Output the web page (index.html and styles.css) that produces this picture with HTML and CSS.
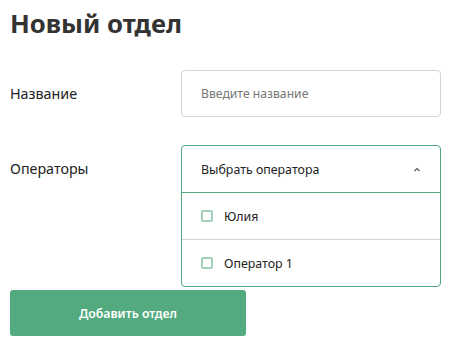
FILE: index.html
```html
<!DOCTYPE html>
<html lang="ru">
<head>
  <meta charset="UTF-8">
  <meta name="viewport" content="width=device-width, initial-scale=1.0">
  <title>Новый отдел</title>
  <link rel="stylesheet" href="styles.css">
</head>
<body>
  <h1>Новый отдел</h1>
  <div class="form">
    <div class="form-row name-row">
      <label class="label" for="name">Название</label>
      <input id="name" class="text-input" type="text" placeholder="Введите название">
    </div>
    <div class="form-row operators-row">
      <span class="label">Операторы</span>
      <div class="select">
        <div class="select-head">
          <span>Выбрать оператора</span>
          <svg class="chevron" width="8" height="5" viewBox="0 0 8 5"><path d="M1.5 4 L4 1.5 L6.5 4" fill="none" stroke="#555" stroke-width="1.2"/></svg>
        </div>
        <label class="option"><span class="box"></span>Юлия</label>
        <label class="option"><span class="box"></span>Оператор 1</label>
      </div>
    </div>
    <button class="submit">Добавить отдел</button>
  </div>
</body>
</html>
```

FILE: styles.css
```css
:root {
  --text-color: #222;
  --green: #52aa7e;
  --border: #d3d3d3;
}
body {
  margin: 0;
  padding: 10px;
  font-family: 'Noto Sans', 'Open Sans', sans-serif;
  color: var(--text-color);
  background: #fff;
}
h1 {
  margin: 0;
  font-size: 25.7px;
  font-weight: 700;
  line-height: 28px;
  color: #333;
}
.form {
  display: flex;
  flex-direction: column;
}
.form-row {
  display: flex;
  align-items: flex-start;
}
.name-row {
  margin-top: 32px;
}
.operators-row {
  margin-top: 28px;
}
.label {
  width: 171px;
  font-size: 14.3px;
  line-height: 47px;
}
.text-input {
  box-sizing: border-box;
  width: 260px;
  height: 47px;
  padding: 0 19px;
  border: 1px solid var(--border);
  border-radius: 4px;
  font-family: inherit;
  font-size: 12.2px;
  color: var(--text-color);
  outline: none;
}
.text-input::placeholder {
  color: #777;
}
.select {
  box-sizing: border-box;
  width: 260px;
  border: 1px solid var(--green);
  border-radius: 4px;
  font-size: 12.4px;
}
.select-head {
  display: flex;
  align-items: center;
  justify-content: space-between;
  height: 46px;
  padding: 0 19px;
  border-bottom: 1px solid var(--green);
}
.option {
  display: flex;
  align-items: center;
  gap: 11px;
  height: 46px;
  padding: 0 19px;
}
.option + .option {
  border-top: 1px solid var(--border);
}
.box {
  box-sizing: border-box;
  width: 12px;
  height: 12px;
  border: 2px solid #a3d1ba;
  border-radius: 2px;
}
.submit {
  margin-top: 3px;
  width: 236px;
  height: 46px;
  background: var(--green);
  color: #fff;
  border: none;
  border-radius: 3px;
  font-family: inherit;
  font-size: 12.3px;
  font-weight: 600;
}
```
